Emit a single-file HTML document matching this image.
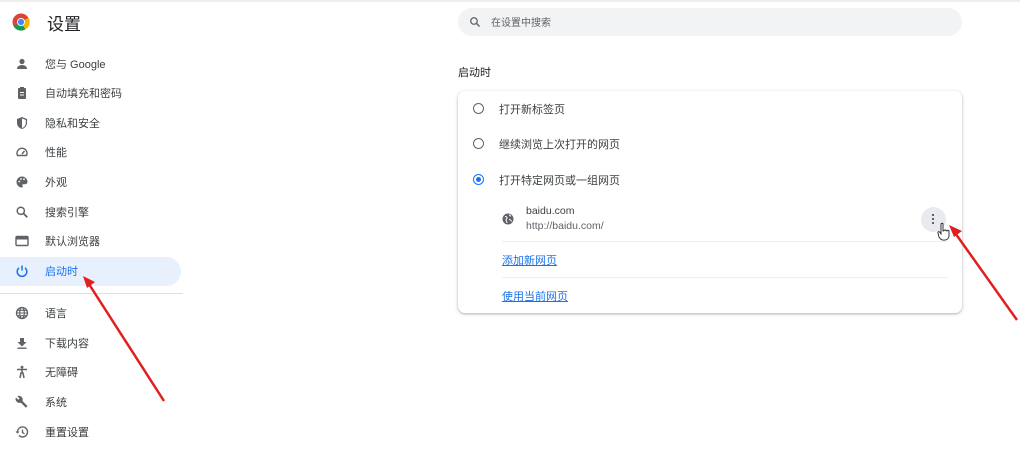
<!DOCTYPE html>
<html><head><meta charset="utf-8"><style>
body{margin:0;width:1020px;height:453px;background:#fff;font-family:"Liberation Sans","Noto Sans CJK SC",sans-serif;position:relative;overflow:hidden;color:#202124}
.a{position:absolute}
.nav{position:absolute;left:0;width:181px;height:29px;font-size:11px;color:#3c4043}
.nav span{position:absolute;left:45px;top:6px}
.nav svg{position:absolute;left:15px;top:7px}
.t{font-size:11px;color:#3c4043;position:absolute}
.radio{position:absolute;left:473px;width:9px;height:9px;border:1.6px solid #5f6368;border-radius:50%}
a{color:#1a73e8;text-decoration:underline}
</style></head><body>
<div class="a" style="left:0;top:0;width:1020px;height:2px;background:#eeeeee"></div>
<svg class="a" style="left:12px;top:13px" width="18" height="18" viewBox="0 0 18 18">
<circle cx="9" cy="9" r="8.5" fill="#db4437"/>
<path d="M9 9 L1.6 13.3 A8.5 8.5 0 0 0 13.3 16.4Z" fill="#0f9d58"/>
<path d="M9 9 L13.3 16.4 A8.5 8.5 0 0 0 17.5 9 L9 9Z" fill="#f4b400"/>
<path d="M9 9 L17.5 9 A8.5 8.5 0 0 0 16.4 4.8Z" fill="#f4b400"/>
<circle cx="9" cy="9" r="4" fill="#fff"/><circle cx="9" cy="9" r="3.1" fill="#4285f4"/>
</svg>
<div class="a" style="left:47px;top:10px;font-size:17px;color:#202124">设置</div>

<div class="nav" style="top:50px"><svg width="14" height="14" viewBox="0 0 14 14"><circle cx="7" cy="4.5" r="2.6" fill="#5f6368"/><path d="M2 12c0-3 3-4 5-4s5 1 5 4z" fill="#5f6368"/></svg><span>您与 Google</span></div>
<div class="nav" style="top:79px"><svg width="14" height="14" viewBox="0 0 14 14"><rect x="3" y="2" width="8" height="11" rx="1" fill="#5f6368"/><rect x="5" y="1" width="4" height="2" fill="#5f6368"/><rect x="5" y="6" width="4" height="1" fill="#fff"/><rect x="5" y="8.5" width="4" height="1" fill="#fff"/></svg><span>自动填充和密码</span></div>
<div class="nav" style="top:109px"><svg width="14" height="14" viewBox="0 0 14 14"><path d="M7 1l5 2v4c0 3-2.2 5.3-5 6-2.8-.7-5-3-5-6V3z" fill="#5f6368"/><path d="M7 2.5v9.5c2-.6 3.8-2.5 3.8-5V4z" fill="#fff"/></svg><span>隐私和安全</span></div>
<div class="nav" style="top:138px"><svg width="14" height="14" viewBox="0 0 14 14"><path d="M2.5 10.5a5 5 0 1 1 9 0z" fill="none" stroke="#5f6368" stroke-width="1.4"/><path d="M7 9l2.5-3" stroke="#5f6368" stroke-width="1.4"/></svg><span>性能</span></div>
<div class="nav" style="top:168px"><svg width="14" height="14" viewBox="0 0 14 14"><path d="M7 1.5a5.5 5.5 0 0 0 0 11c1 0 1-1 .5-1.7-.5-.7 0-1.5.8-1.5H10a2.5 2.5 0 0 0 2.5-2.5C12.5 4 10 1.5 7 1.5z" fill="#5f6368"/><circle cx="4.3" cy="6.5" r=".9" fill="#fff"/><circle cx="6" cy="4" r=".9" fill="#fff"/><circle cx="9" cy="4.2" r=".9" fill="#fff"/></svg><span>外观</span></div>
<div class="nav" style="top:198px"><svg width="14" height="14" viewBox="0 0 14 14"><circle cx="5.8" cy="5.8" r="3.6" fill="none" stroke="#5f6368" stroke-width="1.5"/><path d="M8.5 8.5l3.8 3.8" stroke="#5f6368" stroke-width="1.8"/></svg><span>搜索引擎</span></div>
<div class="nav" style="top:227px"><svg width="14" height="14" viewBox="0 0 14 14"><rect x="1" y="2.5" width="12" height="9" rx="1" fill="none" stroke="#5f6368" stroke-width="1.4"/><rect x="1" y="2.5" width="12" height="3" fill="#5f6368"/></svg><span>默认浏览器</span></div>
<div class="nav" style="top:257px;background:#e8f0fe;border-radius:0 15px 15px 0;color:#1a73e8"><svg width="14" height="14" viewBox="0 0 14 14"><path d="M4 3.8a4.8 4.8 0 1 0 6 0" fill="none" stroke="#1a73e8" stroke-width="1.5"/><path d="M7 1.5v5" stroke="#1a73e8" stroke-width="1.5"/></svg><span>启动时</span></div>
<div class="a" style="left:0;top:293px;width:183px;height:1px;background:#e0e0e0"></div>
<div class="nav" style="top:299px"><svg width="14" height="14" viewBox="0 0 14 14"><circle cx="7" cy="7" r="5.5" fill="none" stroke="#5f6368" stroke-width="1.3"/><ellipse cx="7" cy="7" rx="2.3" ry="5.5" fill="none" stroke="#5f6368" stroke-width="1.2"/><path d="M1.5 7h11M2.5 4.3h9M2.5 9.7h9" stroke="#5f6368" stroke-width="1.1"/></svg><span>语言</span></div>
<div class="nav" style="top:329px"><svg width="14" height="14" viewBox="0 0 14 14"><path d="M5 2h4v4h2.5L7 10.5 2.5 6H5z" fill="#5f6368"/><rect x="2.5" y="11.5" width="9" height="1.4" fill="#5f6368"/></svg><span>下载内容</span></div>
<div class="nav" style="top:358px"><svg width="14" height="14" viewBox="0 0 14 14"><circle cx="7" cy="2.2" r="1.4" fill="#5f6368"/><path d="M2 4.5h10M7 4.5v4M5 13l1-5h2l1 5" stroke="#5f6368" stroke-width="1.5" fill="none"/></svg><span>无障碍</span></div>
<div class="nav" style="top:388px"><svg width="14" height="14" viewBox="0 0 14 14"><path d="M12.5 11l-5-5c.5-1.4.2-3-1-4.2C5.3.7 3.6.5 2.3 1.1L4.6 3.4 3.2 4.8.9 2.5C.2 3.8.5 5.5 1.7 6.7c1.2 1.2 2.8 1.5 4.2 1l5 5z" fill="#5f6368"/></svg><span>系统</span></div>
<div class="nav" style="top:418px"><svg width="14" height="14" viewBox="0 0 14 14"><path d="M2.5 7a5 5 0 1 1 1.5 3.5" fill="none" stroke="#5f6368" stroke-width="1.4"/><path d="M0.5 6.5h4l-2 2.3z" fill="#5f6368"/><path d="M7.5 4.5V7.5l2 1.3" fill="none" stroke="#5f6368" stroke-width="1.3"/></svg><span>重置设置</span></div>

<div class="a" style="left:458px;top:8px;width:504px;height:28px;background:#f1f3f4;border-radius:14px"></div>
<svg class="a" style="left:469px;top:16px" width="12" height="12" viewBox="0 0 14 14"><circle cx="5.8" cy="5.8" r="3.8" fill="none" stroke="#5f6368" stroke-width="1.5"/><path d="M8.5 8.5l3.8 3.8" stroke="#5f6368" stroke-width="1.7"/></svg>
<div class="a" style="left:491px;top:14px;font-size:10px;color:#5f6368">在设置中搜索</div>

<div class="t" style="left:458px;top:64px;color:#202124">启动时</div>
<div class="a" style="left:458px;top:91px;width:504px;height:222px;background:#fff;border-radius:7px;box-shadow:0 1px 2px rgba(60,64,67,.3),0 1px 4px rgba(60,64,67,.15)"></div>
<div class="radio" style="top:103px"></div><div class="t" style="left:499px;top:101px">打开新标签页</div>
<div class="radio" style="top:138px"></div><div class="t" style="left:499px;top:136px">继续浏览上次打开的网页</div>
<div class="radio" style="top:174px;border-color:#1a73e8"><div style="position:absolute;left:2px;top:2px;width:5px;height:5px;border-radius:50%;background:#1a73e8"></div></div><div class="t" style="left:499px;top:172px">打开特定网页或一组网页</div>
<svg class="a" style="left:502px;top:213px" width="12" height="12" viewBox="0 0 12 12"><circle cx="6" cy="6" r="5.5" fill="#5f6368"/><path d="M3 3.5c1 0 2 .5 2 1.5s-1 1-1 2 1 1.5 1 3M7.5 1.5c0 1 .5 1.5 1.5 1.5M7 6.5c1 0 2 .5 2.5 2" stroke="#fff" stroke-width="1" fill="none"/></svg>
<div class="a" style="left:526px;top:205px;font-size:10.5px;color:#3c4043">baidu.com</div>
<div class="a" style="left:526px;top:220px;font-size:10.5px;color:#5f6368">http://baidu.com/</div>
<div class="a" style="left:921px;top:207px;width:25px;height:25px;border-radius:50%;background:#e8eaed"></div>
<div class="a" style="left:932px;top:214px;width:2px;height:2px;background:#5f6368;box-shadow:0 4px 0 #5f6368,0 8px 0 #5f6368"></div>
<div class="a" style="left:502px;top:241px;width:446px;height:1px;background:#eceff1"></div>
<div class="t" style="left:502px;top:252px"><a>添加新网页</a></div>
<div class="a" style="left:502px;top:277px;width:446px;height:1px;background:#eceff1"></div>
<div class="t" style="left:502px;top:288px"><a>使用当前网页</a></div>

<svg class="a" style="left:937px;top:222px" width="14" height="20" viewBox="0 0 14 20"><path d="M4 2c0-1 2-1 2 0v7l1-.3c0-1 2-1 2 0l1 .2c0-1 2-1 2 .2v5c0 2-2 4-4 4H6c-2 0-3-2-4-3L1 11c-.5-1 .8-2 1.6-1L4 12z" fill="#fff" stroke="#222" stroke-width=".9"/></svg>
<svg class="a" style="left:0;top:0" width="1020" height="453">
<path d="M164 401L87 281" stroke="#e02020" stroke-width="2.5"/><path d="M83 276l12 6-8 6z" fill="#e02020"/>
<path d="M1017 320L953 230" stroke="#e02020" stroke-width="2.5"/><path d="M949 225l13 6-8 6z" fill="#e02020"/>
</svg>
</body></html>
